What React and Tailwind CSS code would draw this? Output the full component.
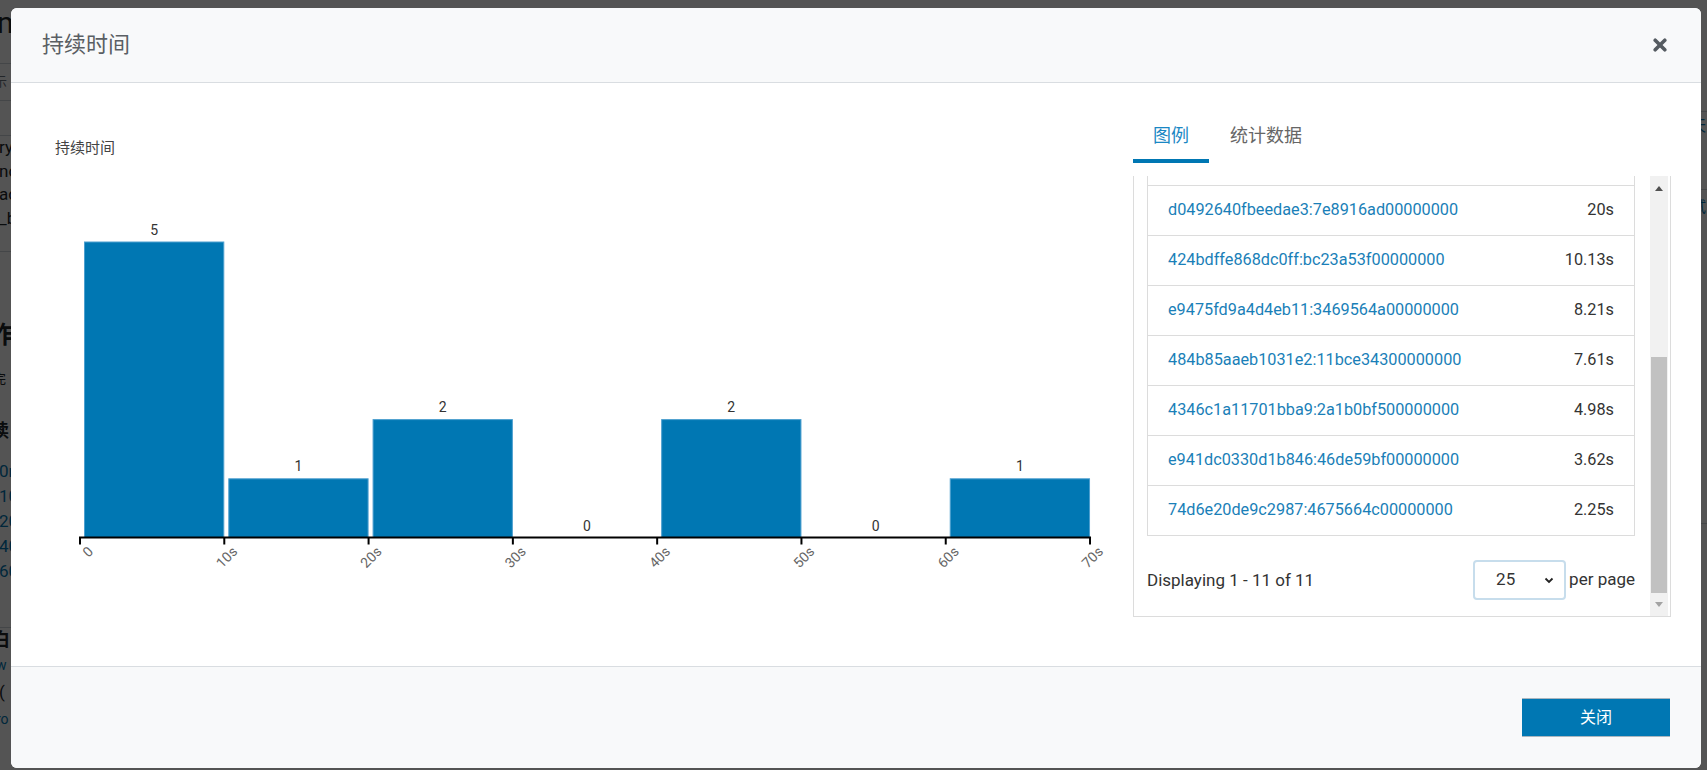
import { useLayoutEffect, useRef } from 'react'

const bins = [5, 1, 2, 0, 2, 0, 1]
const tickLabels = ['0', '10s', '20s', '30s', '40s', '50s', '60s', '70s']
const X0 = 80
const BW = 144.29
const BASE = 537.5
const UNIT = 59.2

const rows = [
  ['9b1c3e7a2f8d4c60:5e21a07b00000000', '1.08m'],
  ['c37f0a9e51b2d846:0f93c2d100000000', '47.36s'],
  ['5a80e4d2c9f1b037:8d4a61e200000000', '43.92s'],
  ['f12b9c07e6a3d548:2c7e90a400000000', '24.17s'],
  ['d0492640fbeedae3:7e8916ad00000000', '20s'],
  ['424bdffe868dc0ff:bc23a53f00000000', '10.13s'],
  ['e9475fd9a4d4eb11:3469564a00000000', '8.21s'],
  ['484b85aaeb1031e2:11bce34300000000', '7.61s'],
  ['4346c1a11701bba9:2a1b0bf500000000', '4.98s'],
  ['e941dc0330d1b846:46de59bf00000000', '3.62s'],
  ['74d6e20de9c2987:4675664c00000000', '2.25s'],
]

function DurationChart() {
  return (
    <svg width="1065" height="430" viewBox="55 158 1065 430" fontFamily="Roboto, 'Noto Sans CJK SC', sans-serif">
      {bins.map((c, i) => {
        const x = X0 + i * BW
        const h = c * UNIT
        return (
          <g key={i}>
            {c > 0 && (
              <rect x={x + 4.5} y={BASE - h + 0.5} width={BW - 5} height={h - 0.5}
                fill="#0077b3" stroke="#4d9fcf" strokeWidth="1" />
            )}
            <text x={x + 2 + BW / 2} y={BASE - h - 7} textAnchor="middle" fontSize="14" fill="#333">{c}</text>
          </g>
        )
      })}
      <line x1={X0 - 1} y1={BASE} x2={X0 + 7 * BW + 1} y2={BASE} stroke="#000" strokeWidth="2" />
      {tickLabels.map((t, i) => {
        const x = X0 + i * BW
        return (
          <g key={t}>
            <line x1={x} y1={BASE} x2={x} y2={BASE + 7} stroke="#000" strokeWidth="2" />
            <text transform={`translate(${x + 14},${BASE + 15}) rotate(-45)`} textAnchor="end" fontSize="14" fill="#666">{t}</text>
          </g>
        )
      })}
    </svg>
  )
}

function FakeScrollbar() {
  return (
    <div className="w-[18px] mr-[2px] bg-[#f1f1f1] flex flex-col items-center">
      <div className="h-[22px] flex items-center justify-center pt-[2px]">
        <svg width="8" height="5" viewBox="0 0 8 5"><path d="M0 5 L4 0 L8 5 Z" fill="#505050" /></svg>
      </div>
      <div className="mt-[159px] h-[236px] w-[16px] bg-[#c1c1c1]" />
      <div className="flex-1 flex items-center justify-center">
        <svg width="8" height="5" viewBox="0 0 8 5"><path d="M0 0 L8 0 L4 5 Z" fill="#a3a3a3" /></svg>
      </div>
    </div>
  )
}

function LegendPanel() {
  const scroller = useRef(null)
  useLayoutEffect(() => {
    if (scroller.current) scroller.current.scrollTop = 206
  }, [])

  return (
    <div className="mt-[13px] h-[441px] border-x border-b border-[#dcdcdc] flex">
      <div ref={scroller} className="flex-1 overflow-hidden pl-[13px] pr-[15px]">
        <div className="pt-[14px] pb-[16px]">
          <div className="border border-[#dcdcdc]">
            {rows.map(([id, val], i) => (
              <div key={id} className={`h-[50px] flex items-center justify-between px-[20px] text-[16.25px] ${i > 0 ? 'border-t border-[#dcdcdc]' : 'pt-[1px]'}`}>
                <span className="text-[#1a7fb8]">{id}</span>
                <span className="text-[#333]">{val}</span>
              </div>
            ))}
          </div>
          <div className="mt-[24px] h-[40px] flex items-center justify-between text-[17px] text-[#333]">
            <span className="pt-[2px]">Displaying 1 - 11 of 11</span>
            <div className="flex items-center">
              <div className="w-[93px] h-[40px] border-2 border-[#c7ddec] rounded-[4px] flex items-center justify-between pl-[21px] pr-[10px]">
                <span>25</span>
                <svg width="10" height="7" viewBox="0 0 10 7"><path d="M1.5 1.5 L5 5 L8.5 1.5" fill="none" stroke="#222" strokeWidth="1.8" /></svg>
              </div>
              <span className="ml-[3px]">per page</span>
            </div>
          </div>
        </div>
      </div>
      <FakeScrollbar />
    </div>
  )
}

function PageBehind() {
  return (
    <div className="flex justify-between h-full text-[#212529]">
      <div className="w-[11px] overflow-hidden flex flex-col items-start whitespace-nowrap">
        <div className="h-[44px] flex items-center text-[30px] -ml-[3px]">m</div>
        <div className="h-[20px] w-full border-b border-[#cfd4d9]" />
        <div className="h-[36px] flex items-center text-[13px] text-[#6c757d] -ml-[6px]">示</div>
        <div className="h-[36px] w-full border-b border-t border-[#cfd4d9]" />
        <div className="h-[24px] flex items-center text-[17px] -ml-[1px]">ry</div>
        <div className="h-[23px] flex items-center text-[17px] -ml-[1px]">nc</div>
        <div className="h-[24px] flex items-center text-[17px] -ml-[1px]">ad</div>
        <div className="h-[23px] flex items-center text-[17px] -ml-[1px]">_b</div>
        <div className="h-[22px] w-full border-b border-[#cfd4d9]" />
        <div className="h-[61px]" />
        <div className="h-[44px] flex items-center text-[24px] font-bold -ml-[10px]">作</div>
        <div className="h-[44px] flex items-center text-[13px] -ml-[7px]">完</div>
        <div className="h-[58px] flex items-center text-[18px] font-bold -ml-[9px]">读</div>
        <div className="flex flex-col text-[17px] text-[#0077b3] -ml-[1px]">
          <div className="h-[25px] flex items-center">0r</div>
          <div className="h-[25px] flex items-center">10</div>
          <div className="h-[25px] flex items-center">20</div>
          <div className="h-[25px] flex items-center">40</div>
          <div className="h-[25px] flex items-center">60</div>
        </div>
        <div className="h-[44px] w-full border-b border-[#cfd4d9]" />
        <div className="h-[22px] flex items-center text-[18px] font-bold -ml-[8px]">白</div>
        <div className="h-[30px] flex items-center text-[14px] text-[#0077b3] -ml-[4px]">w</div>
        <div className="h-[26px] flex items-center text-[17px] -ml-[1px]">(</div>
        <div className="h-[26px] flex items-center text-[14px] text-[#0077b3] -ml-[4px]">ro</div>
      </div>
      <div className="w-[6px] overflow-hidden flex flex-col whitespace-nowrap text-[15px] text-[#0077b3]">
        <div className="h-[112px] border-b border-[#cfd4d9]" />
        <div className="h-[28px] flex items-center -ml-[10px]">天</div>
        <div className="h-[50px] border-b border-[#cfd4d9]" />
        <div className="h-[34px] flex items-center -ml-[10px]">试</div>
        <div className="h-[300px] border-b border-[#cfd4d9]" />
      </div>
    </div>
  )
}

export default function App() {
  return (
    <div className="relative w-[1707px] h-[770px] overflow-hidden bg-white font-[Roboto,'Noto_Sans_CJK_SC',sans-serif]">
      <PageBehind />
      <div className="absolute inset-0 bg-black/[0.67]" />

      <div className="absolute left-[11px] top-[8px] w-[1690px] h-[760px] rounded-[6px] bg-white flex flex-col overflow-hidden">
        <div className="h-[75px] shrink-0 bg-[#f8f9fa] border-b border-[#d9dde1] flex items-center justify-between pl-[31px] pr-[34px]">
          <h2 className="text-[22px] text-[#5a5f64] leading-none">持续时间</h2>
          <svg width="14" height="14" viewBox="0 0 14 14">
            <path d="M2.2 2.2 L11.8 11.8 M11.8 2.2 L2.2 11.8" stroke="#555b61" strokeWidth="3.6" strokeLinecap="round" />
          </svg>
        </div>

        <div className="flex-1 flex">
          <div className="flex-1 pl-[44px] pt-[55px]">
            <div className="text-[15px] leading-[20px] text-[#444]">持续时间</div>
            <DurationChart />
          </div>

          <div className="w-[538px] mr-[30px] pt-[28px]">
            <div className="flex">
              <div className="h-[52px] px-[20px] flex items-center border-b-4 border-[#0077b3] text-[18px] text-[#1a87c4]">图例</div>
              <div className="h-[52px] px-[21px] flex items-center border-b-4 border-transparent text-[18px] text-[#666]">统计数据</div>
            </div>
            <LegendPanel />
          </div>
        </div>

        <div className="h-[102px] shrink-0 bg-[#f8f9fa] border-t border-[#d9dde1] flex items-center justify-end pr-[31px]">
          <button className="w-[148px] h-[39px] bg-[#0077b3] border-y border-[#a9b6bf] text-white text-[16px]">关闭</button>
        </div>
      </div>
    </div>
  )
}
